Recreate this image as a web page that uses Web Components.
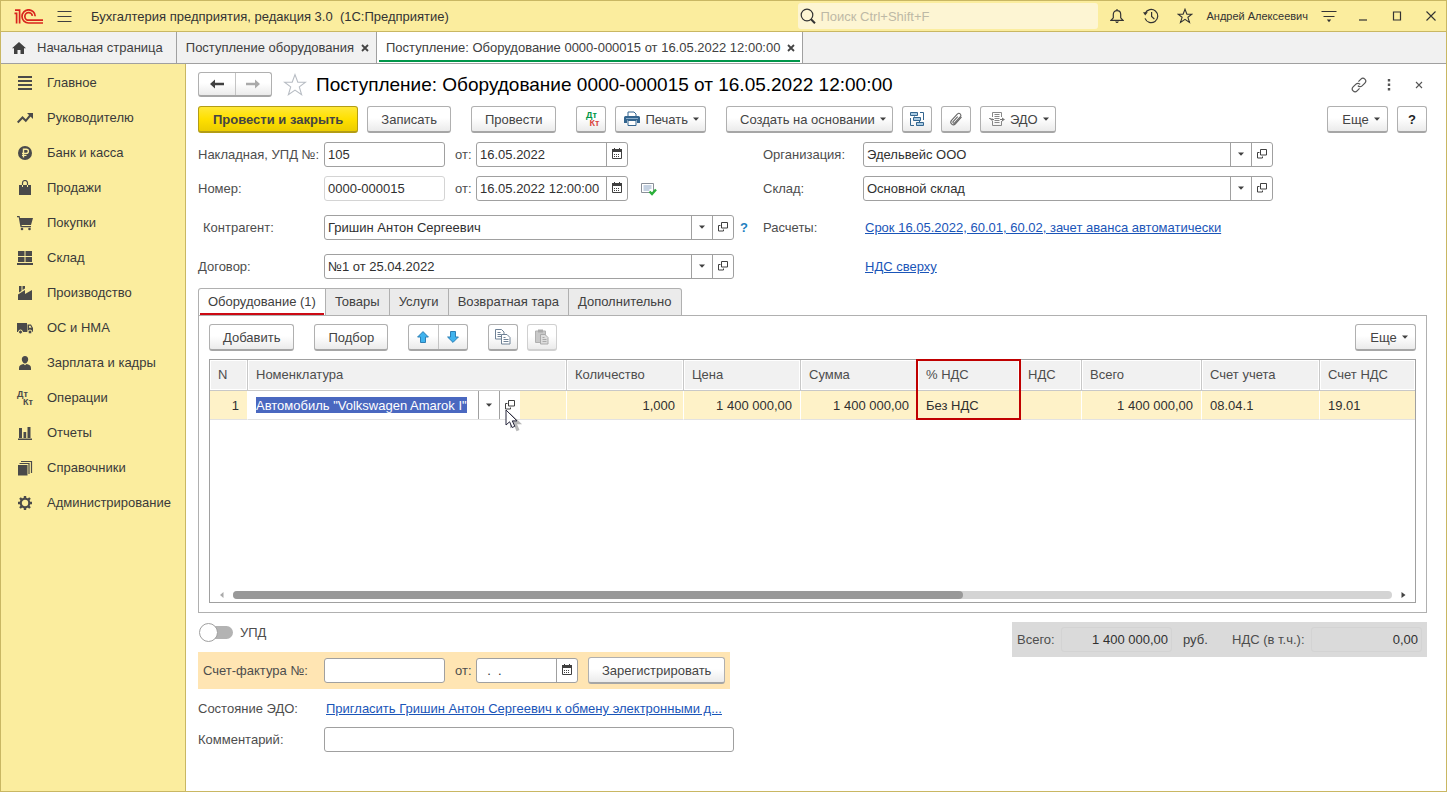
<!DOCTYPE html>
<html lang="ru">
<head>
<meta charset="utf-8">
<title>Бухгалтерия предприятия, редакция 3.0</title>
<style>
  html, body { margin: 0; }
  body { font: 13px/15px "Liberation Sans", Arial, sans-serif; color: #404040; background: #fff; }
</style>
</head>
<body>
<app-window></app-window>
<script>
const ICONS = {
  logo: [30, 15, '<g fill="none" stroke="#d9251d" stroke-width="1.7"><path d="M.5 4.4H2.6V14.5M1 1.2H5.6V14.5"/><path d="M29 14H14.6A6.6 6.6 0 1 1 21.2 7.2"/><path d="M29 11.2H14.8A3.8 3.8 0 1 1 18.4 6.8" /></g>'],
  burger: [15, 13, '<path d="M.5 1.5h14M.5 6.5h14M.5 11.5h14" stroke="#404040"/>'],
  search: [16, 16, '<circle cx="7" cy="7" r="5.8" fill="none" stroke="#333" stroke-width="1.2"/><path d="M11 11.3l4 4" stroke="#333" stroke-width="2"/>'],
  bell: [14, 16, '<path d="M7 1v1.5M1 12.3h12L10.7 9.8V6.4C10.7 4 9.2 2.6 7 2.6S3.3 4 3.3 6.4v3.4z" fill="none" stroke="#333" stroke-width="1.2"/><path d="M5 13.5h4L7.6 15H6.4z" fill="#333"/>'],
  history: [16, 16, '<path d="M2.2 5.2A6.6 6.6 0 1 1 2 10.4M8.6 4v4.4l2.8 2.8" fill="none" stroke="#333" stroke-width="1.2"/><path d="M0 4.2l4.8.1L2.2 7.6z" fill="#333"/>'],
  star: [16, 16, '<path d="M8 1.2l1.9 5h5L10.9 9.3l1.6 5.2L8 11.4l-4.5 3.1 1.6-5.2L1.1 6.2h5z" fill="none" stroke="#333" stroke-width="1.1"/>'],
  bigstar: [24, 24, '<path d="M12 1.6l2.8 7.6h7.7l-6.2 4.7 2.3 7.8L12 17.1l-6.6 4.6 2.3-7.8L1.500 9.200h7.700z" fill="#fff" stroke="#b7bcc3" stroke-width="1.1"/>'],
  options: [16, 14, '<path d="M.5 2.5h15M2.5 7.500h11" stroke="#333" stroke-width="1.2"/><path d="M5.800 10.500h4.400L8 13.200z" fill="#333"/>'],
  minimize: [12, 12, '<path d="M2 10h8" stroke="#333" stroke-width="1.2"/>'],
  maximize: [12, 12, '<path d="M2.500 2h7v8h-7z" fill="none" stroke="#333" stroke-width="1.200"/>'],
  close: [12, 12, '<path d="M1.500 1.500l9 9M10.500 1.500l-9 9" stroke="#333" stroke-width="1.100"/>'],
  formclose: [8, 8, '<path d="M1 1l6 6M7 1L1 7" stroke="#555" stroke-width="1.1"/>'],
  tabclose: [8, 8, '<path d="M1 1l6 6M7 1L1 7" stroke="#444" stroke-width="1.8"/>'],
  home: [14, 12, '<path d="M7 0L0 6.200h2V12h3.500V8h3v4H12V6.200h2z" fill="#404040"/>'],
  link: [16, 16, '<g fill="none" stroke="#555" stroke-width="1.200" transform="rotate(-45 8 8)"><path d="M6 10.800H2.500a2.800 2.800 0 0 1 0-5.600H6.500a2.800 2.800 0 0 1 2.700 3.200M10 5.200h3.500a2.800 2.800 0 0 1 0 5.600H9.500a2.800 2.800 0 0 1-2.700-3.200"/></g>'],
  dots: [4, 12, '<path d="M.8 0h2.400v2.400H.8zM.8 4.500h2.400v2.400H.8zM.8 9h2.400v2.400H.8z" fill="#555"/>'],
  left: [14, 10, '<path d="M0 5l5-4.500v3.300h9v2.400H5v3.300z" fill="#404040"/>'],
  right: [14, 10, '<path d="M14 5L9 .5v3.300H0v2.400h9v3.300z" fill="#aaa"/>'],
  caret: [6, 4, '<path d="M0 .5h6L3 3.700z" fill="#404040"/>'],
  prev: [5, 6, '<path d="M4.500 0v6L1 3z" fill="#aaa"/>'],
  next: [5, 6, '<path d="M.5 0v6L4.500 3z" fill="#444"/>'],
  printer: [16, 16, '<path d="M4 5V1h6l2 2v2" fill="#fff" stroke="#33658f"/><path d="M1.500 5h13A1.500 1.500 0 0 1 16 6.500V12h-3V9.500H3V12H0V6.500A1.500 1.500 0 0 1 1.500 5z" fill="#33658f"/><path d="M4 9.500h8v5H4z" fill="#fff" stroke="#33658f"/><path d="M2 7.500h12" stroke="#9fc0da" stroke-width=".8"/>'],
  structure: [16, 16, '<path d="M1.500 7v7.500H5M11 1.500h3.500V9" fill="none" stroke="#33658f"/><path d="M5.500 5.500v3H5M10.500 9.500v2" fill="none" stroke="#33658f"/><path d="M1.500 1.500h7v3h-7zM4.500 6.500h7v3h-7zM7.500 11.500h7v3h-7z" fill="#a9cbe3" stroke="#33658f"/>'],
  clip: [16, 16, '<path d="M12.800 6.200L7.500 12a2.600 2.600 0 0 1-3.900-3.400L9.800 2a1.900 1.900 0 0 1 2.900 2.500L7 10.800a1 1 0 0 1-1.600-1.300L10 4.600M12.800 6.200l1-1.300" transform="translate(-.3 1)" fill="none" stroke="#666" stroke-width="1.100"/>'],
  edo: [16, 16, '<path d="M3.500 6V1.500h9V6M3.500 10v4.500h9V10" fill="none" stroke="#888"/><path d="M5.500 3.500h5M5.500 5.500h5M5.500 7.500h5M5.500 9.500h5M5.500 11.500h5" stroke="#888"/><path d="M3.500 8V7L1 8.500 3.500 10V9H5V8zM11 8h2V6.500L16 8.500l-3 1.900V9h-2z" fill="#777"/><path d="M0 7.500h2" stroke="#888"/>'],
  calendar: [10, 11, '<path d="M.5 3v7.500h9V3" fill="#fff" stroke="#404040"/><path d="M0 1h10v3H0zM2 0h1v1H2zM7 0h1v1H7zM2 6h1v1H2zM4 6h1v1H4zM6 6h1v1H6zM2 8h1v1H2zM4 8h1v1H4zM6 8h1v1H6z" fill="#404040"/>'],
  open: [10, 10, '<path d="M3.500.5h6v5.500h-6zM2.500 3.500H.5v5.500h5V7.500" fill="none" stroke="#404040"/>'],
  posted: [16, 14, '<path d="M.5 1.500h12v9H.5z" fill="#fff" stroke="#8a9099"/><path d="M2.500 4h8M2.500 6h8M2.500 8h6" stroke="#8aa4c4"/><path d="M8.500 9.500l2.500 2.500 4-4.500" fill="none" stroke="#2bb03a" stroke-width="2.400"/>'],
  up: [12, 12, '<path d="M6 .6L11.400 6H8.500v5.500h-5V6H.6z" fill="#3fb3ee" stroke="#2c7fb5"/>'],
  down: [12, 12, '<path d="M6 11.400L11.400 6H8.500V.5h-5V6H.6z" fill="#3fb3ee" stroke="#2c7fb5"/>'],
  copy: [16, 16, '<path d="M.5.5h6l2.500 2.500v7H.5z" fill="#fff" stroke="#6f8296"/><path d="M2.500 3.500h3M2.500 5.500h4M2.500 7.500h4" stroke="#6f8296"/><path d="M6.500 5.500h5.500l3 3v6.500H6.500z" fill="#fff" stroke="#6f8296"/><path d="M8.500 8.500h2M8.500 10.500h5M8.500 12.500h5" stroke="#6f8296"/>'],
  paste: [16, 16, '<path d="M1.500 2h10v11.500h-10z" fill="#c8c8c8" stroke="#b0b0b0"/><path d="M4 .5h5v3H4z" fill="#aaa"/><path d="M6.500 5.500h4.500l3 3v6.500H6.500z" fill="#ddd" stroke="#aaa"/><path d="M8.500 8.500h2M8.500 10.500h4M8.500 12.500h4" stroke="#aaa"/>'],
  cursor: [20, 24, '<path d="M5 4v15.500l4-3.300 2.500 6 3-1.300-2.400-5.600h5z" fill="#000" opacity=".28"/><path d="M1 1v15l3.600-3.200 2.500 5.700 2.700-1.200-2.500-5.400h4.700z" fill="#fff" stroke="#26263c"/>'],
  n_main: [16, 16, '<path d="M1 1h14v2H1zM1 5h14v2H1zM1 9h14v2H1zM1 13h14v2H1z" fill="#4a4a4a"/>'],
  n_chief: [16, 16, '<path d="M.7 12.500L5.500 7.500l3.300 3.300L13.500 5" fill="none" stroke="#4a4a4a" stroke-width="2"/><path d="M10 3h6v6z" fill="#4a4a4a"/>'],
  n_bank: [16, 16, '<circle cx="8" cy="8" r="7" fill="#4a4a4a"/><path d="M6.500 12.500V4.200h2.800a2 2 0 0 1 0 4.200H5M5 10.400h4.500" fill="none" stroke="#fbed9e" stroke-width="1.400"/>'],
  n_sales: [16, 16, '<path d="M2 5h12v10H2z" fill="#4a4a4a"/><path d="M5.500 7V3a2.500 2.500 0 0 1 5 0v4" fill="none" stroke="#4a4a4a" stroke-width="1.200"/><path d="M5.500 5v2M10.500 5v2" stroke="#fbed9e"/>'],
  n_buy: [16, 16, '<path d="M0 1h2.600L3 3h13l-2 7H4.500l.3 1H14v1.300H3.500L1.700 2.300H0z" fill="#4a4a4a"/><circle cx="5" cy="14" r="1.300" fill="#4a4a4a"/><circle cx="12.500" cy="14" r="1.300" fill="#4a4a4a"/>'],
  n_stock: [16, 16, '<path d="M1 1h6.500v5H1zM8.500 1H15v5H8.500zM1 7h6.500v5H1zM8.500 7H15v5H8.500zM0 13h16v2H0z" fill="#4a4a4a"/>'],
  n_prod: [16, 16, '<path d="M1 15V9.500L8 5v4l7-4v10zM2 1h2.500v5L2 7.500zM5.500 1H8v2.500L5.500 5z" fill="#4a4a4a"/>'],
  n_os: [16, 16, '<path d="M0 3h10v9H0zM10.500 4.500h3.500L16 8v4h-5.500z" fill="#4a4a4a"/><path d="M12 5.800h1.500l1 2H12z" fill="#fbed9e"/><g fill="#4a4a4a" stroke="#fbed9e"><circle cx="3.500" cy="12" r="2"/><circle cx="13" cy="12" r="2"/></g>'],
  n_hr: [16, 16, '<path d="M8 1c2 0 3.200 1.300 3.200 3.200S9.800 8.500 8 8.500 4.800 6 4.800 4.200 6 1 8 1zM2 15v-2c0-2.500 2-3.500 4.500-3.900L8 10.300l1.500-1.200C12 9.500 14 10.500 14 13v2z" fill="#4a4a4a"/>'],
  n_rep: [16, 16, '<path d="M2 3h3v10H2zM6.500 7h2.700v6H6.500zM10.500 2h3v11h-3zM1 13.500h14V15H1z" fill="#4a4a4a"/>'],
  n_ref: [16, 16, '<path d="M1 5h9.500v10.500H1z" fill="#4a4a4a"/><path d="M2.500 3.500h9.500V14M4 1.500h10.500V13" fill="none" stroke="#4a4a4a" stroke-width="1.200"/>'],
  n_adm: [16, 16, '<circle cx="8" cy="8" r="4.300" fill="none" stroke="#4a4a4a" stroke-width="2.200"/><path d="M8 1v2.500M8 12.500V15M1 8h2.500M12.500 8H15M3 3l1.800 1.800M11.200 11.200L13 13M13 3l-1.800 1.800M4.800 11.200L3 13" stroke="#4a4a4a" stroke-width="2.400"/>'],
};

function define(name, css, render) {
  customElements.define(name, class extends HTMLElement {
    constructor() {
      super();
      this.attachShadow({ mode: 'open' });
    }
    connectedCallback() {
      if (this.shadowRoot.firstChild) return;
      const t = document.createElement('template');
      t.innerHTML = '<style>*,*::before,*::after{box-sizing:border-box}:host{box-sizing:border-box}button,input,select{font:inherit;color:inherit;margin:0;padding:0;border:0;background:none;outline:0;border-radius:0}' + css + '</style>' + render(this);
      this.shadowRoot.append(t.content.cloneNode(true));
    }
  });
}

define('ui-icon', ':host{display:inline-flex;flex:none}svg{display:block}', el => {
  const [w, h, body] = ICONS[el.getAttribute('name')];
  return `<svg width="${w}" height="${h}" viewBox="0 0 ${w} ${h}" aria-hidden="true">${body}</svg>`;
});

/* Debit / credit mark: two short words set diagonally */
define('dt-kt', `:host{display:grid;width:16px;height:16px;font:bold 9px/8px "Liberation Sans",sans-serif;color:#4a4a4a}
  :host([colored]){--dt:#009646;--kt:#d9453d}
  span:first-of-type{color:var(--dt,inherit)} span:last-of-type{color:var(--kt,inherit);justify-self:end}`,
  () => '<span>Дт</span><span>Кт</span>');

define('cmd-button', `:host{display:inline-flex;flex:none}
  button{display:flex;align-items:center;justify-content:center;gap:7px;height:27px;min-width:30px;width:100%;padding:0 13px;white-space:nowrap;
    border:1px solid #b0b0b0;border-bottom:2px solid #a6a6a6;border-radius:3px;background:linear-gradient(#fff 45%,#ebebeb);color:#444}
  :host([primary]) button{padding:0 14px;font-weight:bold;border-color:#b39d14;background:linear-gradient(#ffe838,#ffe000 50%,#eccd00)}
  :host([square]) button{padding:0;width:30px}
  :host([menu]) button{gap:5px;min-width:61px;padding:0 6px 0 13px}
  :host([menu][tight]) button{padding-left:8px}
  :host([quiet]) button{border-color:#d0d0d0}`,
  el => `<button type="button"${el.title ? ` aria-label="${el.title}"` : ''}><slot></slot>${el.hasAttribute('menu') ? '<ui-icon name="caret"></ui-icon>' : ''}</button>`);

define('pair-button', `:host{display:inline-flex;flex:none;height:var(--h,27px);width:var(--w,60px);border:1px solid #b0b0b0;border-bottom:2px solid #a6a6a6;border-radius:3px;background:linear-gradient(#fff 45%,#ebebeb)}
  button{flex:1;display:flex;align-items:center;justify-content:center}
  button+button{border-left:1px solid #c4c4c4}`,
  el => `<button type="button" aria-label="${el.getAttribute('a')}"><ui-icon name="${el.getAttribute('a')}"></ui-icon></button><button type="button" aria-label="${el.getAttribute('b')}"><ui-icon name="${el.getAttribute('b')}"></ui-icon></button>`);

/* Labelled field. kind: text | date | lookup */
define('form-field', `:host{display:flex;align-items:center;min-width:0}
  label{flex:none;width:var(--label,126px);color:#4d4d4d;white-space:nowrap}
  :host([inset]) label{padding-left:5px}
  .box{display:flex;flex:none;width:var(--box,121px);height:25px;border:1px solid #a0a0a0;border-radius:3px;background:#fff;color:#303030}
  :host([muted]) .box{border-color:#d4d4d4}
  :host([plain]) .box{background:none;border-color:#d3d3d3}
  input,select{flex:1;min-width:0;width:100%;padding:0 3px;appearance:none}
  :host([plain]) input{text-align:right}
  button{flex:none;width:21px;padding-bottom:2px;border-left:1px solid #a0a0a0;display:flex;align-items:center;justify-content:center}`,
  el => {
    const kind = el.getAttribute('kind') || 'text', v = el.getAttribute('value') || '';
    const control = kind === 'lookup'
      ? `<select id="c"><option>${v}</option></select><button type="button" aria-label="Выбрать"><ui-icon name="caret"></ui-icon></button><button type="button" aria-label="Открыть"><ui-icon name="open"></ui-icon></button>`
      : `<input id="c" type="text" value="${v}"${el.hasAttribute('plain') ? ' readonly' : ''}>` + (kind === 'date' ? '<button type="button" aria-label="Календарь"><ui-icon name="calendar"></ui-icon></button>' : '');
    return `<label for="c">${el.getAttribute('label')}</label><div class="box">${control}</div>`;
  });

define('title-bar', `:host{display:flex;align-items:center;height:31px;padding-left:13px;background:#fbed9e;border-bottom:1px solid #c9b763;color:#333}
  .burger{width:15px;height:15px;margin:0 19px 0 13px;display:flex;align-items:center}
  .name{flex:1;white-space:pre}
  .search{display:flex;align-items:center;gap:4px;width:300px;height:26px;padding-left:2px;border-radius:3px;background:#fdf5d3}
  .search input{flex:1;min-width:0}
  .search input::placeholder{color:#bdb9a6;opacity:1}
  .tools{display:flex;align-items:center;margin:0 -2px 0 2px;font-size:11px}
  .tools button{width:34px;height:30px;display:flex;align-items:center;justify-content:center}
  .tools .user{width:auto;padding:0 4px}`,
  () => `<ui-icon name="logo"></ui-icon><button class="burger" type="button" aria-label="Меню"><ui-icon name="burger"></ui-icon></button>
  <div class="name">Бухгалтерия предприятия, редакция 3.0  (1С:Предприятие)</div>
  <div class="search"><ui-icon name="search"></ui-icon><input type="search" aria-label="Поиск" placeholder="Поиск Ctrl+Shift+F"></div>
  <div class="tools">${['bell', 'history', 'star'].map(i => `<button type="button" aria-label="${i}"><ui-icon name="${i}"></ui-icon></button>`).join('')}
  <button class="user" type="button">Андрей Алексеевич</button>${['options', 'minimize', 'maximize', 'close'].map(i => `<button type="button" aria-label="${i}"><ui-icon name="${i}"></ui-icon></button>`).join('')}</div>`);

define('window-tab', `:host{display:flex;align-items:center;gap:7px;padding:0 7px 0 9px;border-right:1px solid #a0a0a0;white-space:nowrap;color:#404040}
  :host([home]){padding:0 13px 0 11px}
  :host([home]) button{display:flex;align-items:center;gap:11px}
  :host([active]){background:linear-gradient(#00964a,#00964a) 50% calc(100% - 1px)/calc(100% - 4px) 2px no-repeat #fff}
  button{display:flex}`,
  el => `<button type="button">${el.hasAttribute('home') ? '<ui-icon name="home"></ui-icon>' : ''}<slot></slot></button>${el.hasAttribute('home') ? '' : '<button type="button" aria-label="Закрыть"><ui-icon name="tabclose"></ui-icon></button>'}`);

define('tab-strip', ':host{display:flex;height:32px;background:#f1f1f1;border-bottom:1px solid #a0a0a0}',
  () => `<window-tab home>Начальная страница</window-tab><window-tab>Поступление оборудования</window-tab><window-tab active>Поступление: Оборудование 0000-000015 от 16.05.2022 12:00:00</window-tab>`);

define('side-nav', `:host{display:block;flex:none;width:185px;padding-top:1px;background:#fbed9e;border-right:1px solid #c9b763}
  a{display:flex;align-items:center;gap:14px;height:35px;padding-left:16px;color:#3a3a3a;text-decoration:none}`,
  () => '<nav>' + [['n_main', 'Главное'], ['n_chief', 'Руководителю'], ['n_bank', 'Банк и касса'], ['n_sales', 'Продажи'], ['n_buy', 'Покупки'], ['n_stock', 'Склад'], ['n_prod', 'Производство'], ['n_os', 'ОС и НМА'], ['n_hr', 'Зарплата и кадры'], ['', 'Операции'], ['n_rep', 'Отчеты'], ['n_ref', 'Справочники'], ['n_adm', 'Администрирование']]
    .map(([i, t]) => `<a href="#">${i ? `<ui-icon name="${i}"></ui-icon>` : '<dt-kt></dt-kt>'}<span>${t}</span></a>`).join('') + '</nav>');

define('data-grid', `:host{display:flex;flex-direction:column;min-height:100px;border:1px solid #a0a0a0;background:#fff}
  .area{flex:1}
  table{width:100%;table-layout:fixed;border-spacing:0}
  th,td{padding:0 8px;text-align:left;font-weight:normal;white-space:nowrap;position:relative}
  th{height:31px;padding-bottom:2px;background:#f1f1f1;border-right:1px solid #c8c8c8;border-bottom:1px solid #c8c8c8;box-shadow:inset 0 0 0 1px #fff;color:#4d4d4d}
  td{height:29px;background:#fef2c8;border-right:1px solid #fff;border-bottom:1px solid #e2e2e2;color:#303030}
  th:last-child,td:last-child{border-right:0}
  .num{text-align:right}
  .mark::after{content:"";position:absolute;z-index:1;left:-2px;right:-2px;top:-1px;height:61px;border:2px solid #c00000}
  .edit{padding:0}
  .editor{display:flex;width:272px;height:28px;background:#fff;align-items:center}
  .slot{flex:1;padding-left:8px;display:flex}
  .slot input{field-sizing:content;background:#4a68c0;color:#fff;height:16px}
  .editor button{width:21px;height:28px;border-left:1px solid #a0a0a0;display:flex;align-items:center;justify-content:center}
  .cursor{position:absolute;left:257px;top:18px;z-index:2}
  .scroll{display:flex;align-items:center;gap:9px;padding:0 9px;height:15px}
  .track{flex:1;height:8px;border-radius:4px;background:#d4d4d4}
  .thumb{width:63%;height:8px;border-radius:4px;background:#999}`,
  () => `<div class="area"><table><colgroup><col style="width:38px"><col style="width:319px"><col style="width:117px"><col style="width:117px"><col style="width:117px"><col style="width:102px"><col style="width:62px"><col style="width:120px"><col style="width:118px"><col></colgroup>
  <thead><tr><th>N</th><th>Номенклатура</th><th>Количество</th><th>Цена</th><th>Сумма</th><th class="mark">% НДС</th><th>НДС</th><th>Всего</th><th>Счет учета</th><th>Счет НДС</th></tr></thead>
  <tbody><tr><td class="num">1</td><td class="edit"><div class="editor"><div class="slot"><input aria-label="Номенклатура" value='Автомобиль "Volkswagen Amarok I"'></div><button type="button" aria-label="Выбрать"><ui-icon name="caret"></ui-icon></button><button type="button" aria-label="Открыть"><ui-icon name="open"></ui-icon></button></div><ui-icon class="cursor" name="cursor"></ui-icon></td>
  <td class="num">1,000</td><td class="num">1 400 000,00</td><td class="num">1 400 000,00</td><td>Без НДС</td><td></td><td class="num">1 400 000,00</td><td>08.04.1</td><td>19.01</td></tr></tbody></table></div>
  <div class="scroll"><ui-icon name="prev"></ui-icon><div class="track"><div class="thumb"></div></div><ui-icon name="next"></ui-icon></div>`);

define('item-tabs', `:host{display:flex;flex-direction:column}
  .tabs{display:flex;margin-bottom:-1px}
  .tabs button{height:28px;padding:0 9px 2px;border:1px solid #b0b0b0;border-left:0;background:#ebebeb;white-space:nowrap;color:#404040}
  .tabs button:first-child{border-left:1px solid #b0b0b0;border-bottom-color:#fff;border-radius:3px 0 0 0;background:linear-gradient(#cc0a14,#cc0a14) 50% 100%/calc(100% - 2px) 2px no-repeat #fff}
  .tabs button:last-child{border-radius:0 3px 0 0}
  .panel{flex:1;display:flex;flex-direction:column;gap:8px;padding:8px 10px 9px;border:1px solid #b0b0b0}
  .bar{display:flex;gap:20px}
  .group{display:flex;gap:9px}
  .end{margin-left:auto}
  data-grid{flex:1}`,
  () => `<div class="tabs" role="tablist">${['Оборудование (1)', 'Товары', 'Услуги', 'Возвратная тара', 'Дополнительно'].map(t => `<button type="button" role="tab">${t}</button>`).join('')}</div>
  <div class="panel"><div class="bar"><cmd-button>Добавить</cmd-button><cmd-button>Подбор</cmd-button><pair-button a="up" b="down"></pair-button>
  <div class="group"><cmd-button square title="Копировать"><ui-icon name="copy"></ui-icon></cmd-button><cmd-button square quiet title="Вставить"><ui-icon name="paste"></ui-icon></cmd-button></div>
  <cmd-button class="end" menu>Еще</cmd-button></div><data-grid></data-grid></div>`);

define('toggle-switch', `:host{display:block}
  label{display:flex;align-items:center;gap:7px;height:21px;padding-left:1px;color:#4d4d4d}
  input{appearance:none;display:flex;align-items:center;width:34px;height:19px}
  input::before{content:"";width:19px;height:19px;flex:none;border:1px solid #a0a0a0;border-radius:50%;background:#fff;z-index:1}
  input::after{content:"";flex:1;height:13px;margin-left:-8px;border-radius:0 7px 7px 0;background:#b3b3b3}`,
  () => '<label><input type="checkbox" role="switch"><slot></slot></label>');

define('document-form', `:host{display:flex;flex-direction:column;flex:1;min-width:0;padding:8px 19px 39px 12px;background:#fff}
  .head{display:flex;align-items:center;height:25px}
  .head pair-button{--w:74px;--h:25px}
  h1{flex:1;margin:0;font-size:19px;line-height:24px;font-weight:normal;color:#000;white-space:nowrap}
  .head button{display:flex;align-items:center;justify-content:center}
  .fav{width:24px;height:24px;margin:0 9px 0 11px}
  .act{width:30px;height:24px}
  .act:last-child{margin-right:-7px}
  .bar{display:flex;gap:20px;margin:9px 0}
  .group{display:flex;gap:9px}
  .end{margin-left:auto}
  .help{font-weight:bold;color:#222}
  .fields{display:grid;grid-template-columns:536px 510px;column-gap:29px}
  .col{display:flex;flex-direction:column;gap:14px}
  .col.right{--label:100px}
  .stack{display:flex;flex-direction:column;gap:9px}
  .row{display:flex;align-items:center;height:25px}
  .wide{--box:410px}
  .date{--label:21px;--box:152px;margin-left:10px}
  .short{--label:21px;--box:102px;margin:0 10px}
  .row ui-icon{margin-left:13px}
  .q{margin:0 -14px 0 6px;color:#1f7fc0;font-weight:bold}
  .caption{flex:none;width:102px;color:#4d4d4d;white-space:nowrap}
  .wider{width:128px}
  a{color:#1a55b8;white-space:nowrap}
  item-tabs{flex:1;margin-top:9px}
  .foot{display:flex;justify-content:space-between;align-items:flex-start;margin-top:9px}
  .left{display:flex;flex-direction:column;align-items:flex-start}
  .band{display:flex;align-items:center;height:37px;margin:9px 0 7px;padding:0 5px;background:#ffe5b3}
  .band form-field:first-child{--label:121px}
  .comment{margin-top:6px}
  .totals{display:flex;align-items:center;height:35px;padding:0 5px;background:#dadada}
  .totals form-field{--box:111px}
  .sum{--label:44px} .vat{--label:79px}
  .cur{width:49px;margin-left:11px}`,
  () => `<header class="head"><pair-button a="left" b="right"></pair-button><button class="fav" type="button" aria-label="В избранное"><ui-icon name="bigstar"></ui-icon></button>
  <h1>Поступление: Оборудование 0000-000015 от 16.05.2022 12:00:00</h1>${['link', 'dots', 'formclose'].map(i => `<button class="act" type="button" aria-label="${i}"><ui-icon name="${i}"></ui-icon></button>`).join('')}</header>
  <div class="bar"><div class="group"><cmd-button primary>Провести и закрыть</cmd-button><cmd-button>Записать</cmd-button></div><cmd-button>Провести</cmd-button>
  <div class="group"><cmd-button square title="Проводки"><dt-kt colored></dt-kt></cmd-button><cmd-button menu tight><ui-icon name="printer"></ui-icon>Печать</cmd-button></div>
  <div class="group"><cmd-button menu>Создать на основании</cmd-button><cmd-button square title="Структура"><ui-icon name="structure"></ui-icon></cmd-button><cmd-button square title="Файлы"><ui-icon name="clip"></ui-icon></cmd-button><cmd-button menu tight><ui-icon name="edo"></ui-icon>ЭДО</cmd-button></div>
  <div class="group end"><cmd-button menu>Еще</cmd-button><cmd-button square><span class="help">?</span></cmd-button></div></div>
  <div class="fields"><div class="col"><div class="stack">
    <div class="row"><form-field label="Накладная, УПД №:" value="105"></form-field><form-field class="date" kind="date" label="от:" value="16.05.2022"></form-field></div>
    <div class="row"><form-field muted label="Номер:" value="0000-000015"></form-field><form-field class="date" kind="date" label="от:" value="16.05.2022 12:00:00"></form-field><ui-icon name="posted"></ui-icon></div></div>
    <div class="row"><form-field class="wide" inset kind="lookup" label="Контрагент:" value="Гришин Антон Сергеевич"></form-field><button class="q" type="button" aria-label="Справка">?</button></div>
    <form-field class="wide" kind="lookup" label="Договор:" value="№1 от 25.04.2022"></form-field></div>
  <div class="col right"><div class="stack"><form-field class="wide" kind="lookup" label="Организация:" value="Эдельвейс ООО"></form-field><form-field class="wide" kind="lookup" label="Склад:" value="Основной склад"></form-field></div>
    <div class="row"><span class="caption">Расчеты:</span><a href="#">Срок 16.05.2022, 60.01, 60.02, зачет аванса автоматически</a></div>
    <div class="row"><span class="caption"></span><a href="#">НДС сверху</a></div></div></div>
  <item-tabs></item-tabs>
  <footer class="foot"><div class="left"><toggle-switch>УПД</toggle-switch>
    <div class="band"><form-field label="Счет-фактура №:"></form-field><form-field class="short" kind="date" label="от:" value="  .  ."></form-field><cmd-button>Зарегистрировать</cmd-button></div>
    <div class="row"><span class="caption wider">Состояние ЭДО:</span><a href="#">Пригласить Гришин Антон Сергеевич к обмену электронными д...</a></div>
    <form-field class="comment wide" label="Комментарий:"></form-field></div>
  <div class="totals"><form-field class="sum" plain label="Всего:" value="1 400 000,00"></form-field><span class="cur">руб.</span><form-field class="vat" plain label="НДС (в т.ч.):" value="0,00"></form-field></div></footer>`);

define('app-window', `:host{display:flex;flex-direction:column;min-height:100vh;border:1px solid #c9b763}
  .body{flex:1;display:flex}`,
  () => '<title-bar></title-bar><tab-strip></tab-strip><div class="body"><side-nav></side-nav><document-form></document-form></div>');
</script>
</body>
</html>
